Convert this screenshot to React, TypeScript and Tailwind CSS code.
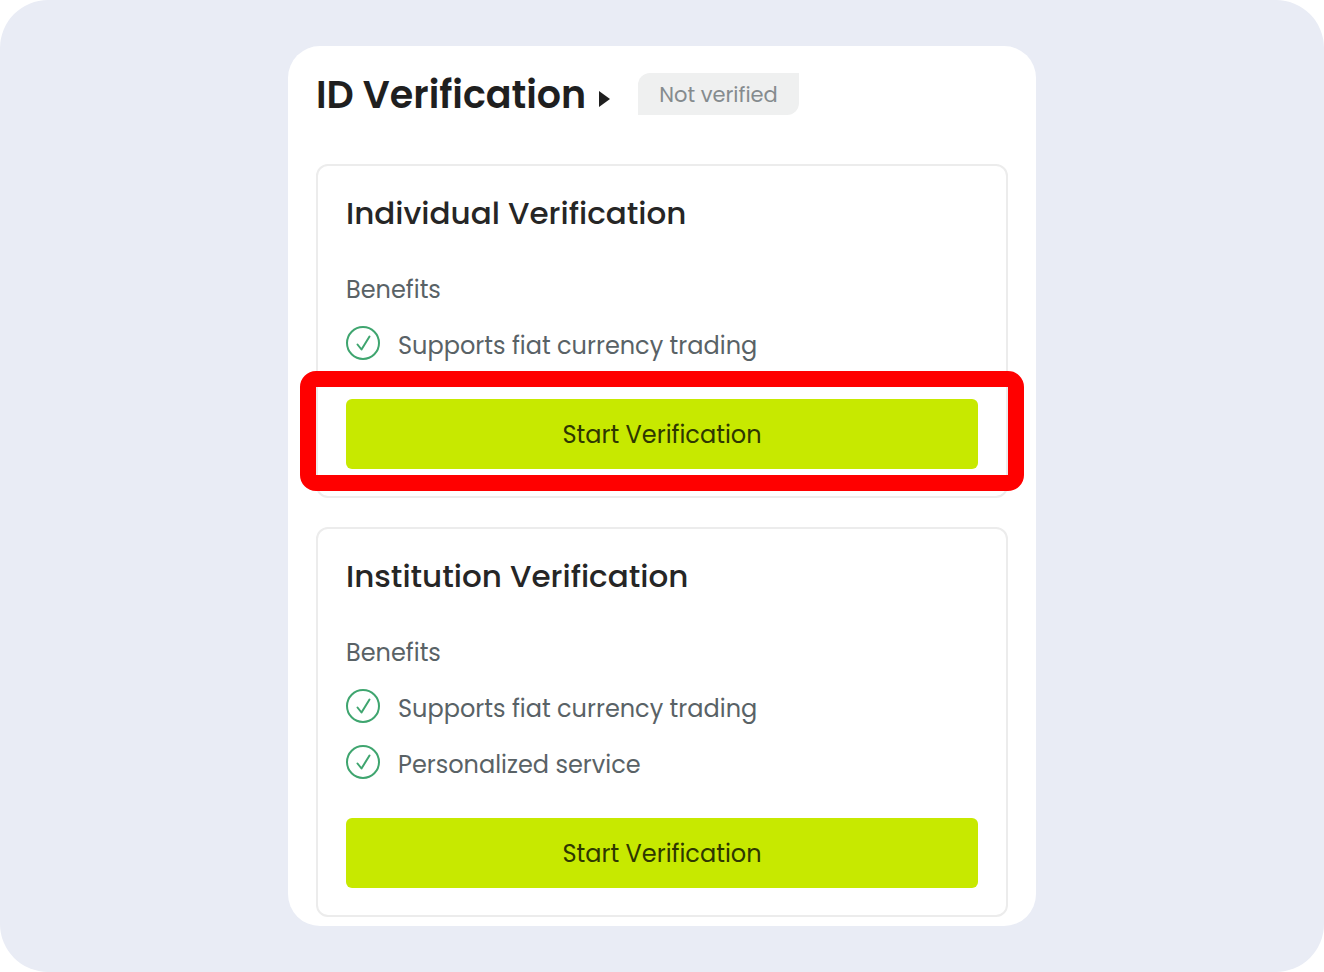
type PlanProps = { title: string; benefits: string[]; highlighted?: boolean };

function CheckIcon() {
  return (
    <svg viewBox="0 0 36 36" className="h-9 w-9 shrink-0 overflow-visible" fill="none" stroke="#3fa56f" strokeWidth="2" aria-hidden="true">
      <circle cx="17" cy="15" r="16" />
      <path d="M11.5 16.5 15.5 21.5 23.5 8.5" strokeLinecap="round" strokeLinejoin="round" />
    </svg>
  );
}

function VerificationCard({ title, benefits, highlighted = false }: PlanProps) {
  return (
    <section className="rounded-xl border-2 border-[#ececec] px-7 py-[27px]">
      <h2 className="text-[31px] leading-10 font-medium whitespace-nowrap text-[#262626]">{title}</h2>
      <p className="mt-[39px] text-2xl leading-9 text-[#596266]">Benefits</p>
      <ul className="mt-5 flex flex-col gap-5">
        {benefits.map((benefit) => (
          <li key={benefit} className="flex items-center gap-4 text-2xl leading-9 text-[#596266]">
            <CheckIcon />
            <span>{benefit}</span>
          </li>
        ))}
      </ul>
      <div className="relative mt-[35px]">
        <button type="button" className="block h-[70px] w-full rounded-md bg-[#c7e900] pt-0.5 text-2xl text-[#2e3700]">
          Start Verification
        </button>
        {highlighted && (
          <div className="pointer-events-none absolute -inset-x-[46px] -top-7 -bottom-[22px] rounded-2xl border-16 border-[#ff0000]" />
        )}
      </div>
    </section>
  );
}

export default function App() {
  return (
    <div className="bg-white font-['Poppins','Inter',sans-serif]">
      <div className="rounded-[48px] bg-[#e9ecf5] py-[46px]">
        <main className="mx-auto max-w-[748px] rounded-[32px] bg-white px-7 pt-[27px] pb-[9px]">
          <header className="flex items-start">
            <h1 className="text-[38px] leading-[44px] font-semibold whitespace-nowrap text-[#1f1f1f]">ID Verification</h1>
            <svg viewBox="0 0 12 16" className="mt-[18px] ml-3 h-4 w-3" fill="#1f1f1f" aria-hidden="true">
              <path d="M1 0v16l11-8z" />
            </svg>
            <span className="ml-7 flex h-[42px] items-center rounded-tl-xl rounded-br-xl bg-[#eff0f0] px-[21px] pt-0.5 text-[21px] whitespace-nowrap text-[#858b8e]">
              Not verified
            </span>
          </header>
          <div className="mt-[47px] flex flex-col gap-[29px]">
            <VerificationCard title="Individual Verification" benefits={["Supports fiat currency trading"]} highlighted />
            <VerificationCard
              title="Institution Verification"
              benefits={["Supports fiat currency trading", "Personalized service"]}
            />
          </div>
        </main>
      </div>
    </div>
  );
}
